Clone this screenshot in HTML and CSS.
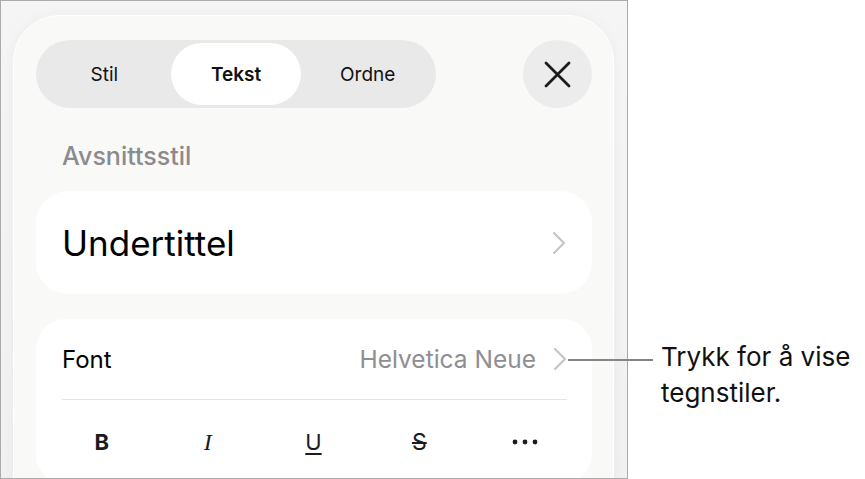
FILE: index.html
```html
<!DOCTYPE html>
<html>
<head>
    <meta charset="UTF-8">
    <title>Tekst</title>
    <link rel="stylesheet" href="styles.css">
</head>
<body>
    <div class="figure">
        <div class="device">
            <div class="sheet">
                <div class="toolbar">
                    <div class="segmented">
                        <div class="segment">Stil</div>
                        <div class="segment selected">Tekst</div>
                        <div class="segment">Ordne</div>
                    </div>
                    <button class="close-button">
                        <svg width="27" height="27" viewBox="0 0 27 27">
                            <path d="M2 2 L25 25 M25 2 L2 25" stroke="#1c1c1e" stroke-width="2.8" stroke-linecap="round" fill="none"/>
                        </svg>
                    </button>
                </div>

                <div class="section-label">Avsnittsstil</div>

                <div class="card style-card">
                    <span class="style-name">Undertittel</span>
                    <svg class="chevron" width="14" height="24" viewBox="0 0 14 24">
                        <path d="M2 2 L12 12 L2 22" stroke="#c5c5c8" stroke-width="2.2" stroke-linecap="round" stroke-linejoin="round" fill="none"/>
                    </svg>
                </div>

                <div class="card font-card">
                    <div class="font-row">
                        <span class="font-label">Font</span>
                        <span class="font-value">
                            Helvetica Neue
                            <svg class="chevron" width="14" height="24" viewBox="0 0 14 24">
                                <path d="M2 2 L12 12 L2 22" stroke="#c5c5c8" stroke-width="2.2" stroke-linecap="round" stroke-linejoin="round" fill="none"/>
                            </svg>
                        </span>
                    </div>
                    <div class="format-row">
                        <div class="format-btn bold">B</div>
                        <div class="format-btn italic">I</div>
                        <div class="format-btn underline">U</div>
                        <div class="format-btn strike">S</div>
                        <div class="format-btn more">
                            <svg width="26" height="6" viewBox="0 0 26 6">
                                <circle cx="3" cy="3" r="2.4" fill="#1c1c1e"/>
                                <circle cx="13" cy="3" r="2.4" fill="#1c1c1e"/>
                                <circle cx="23" cy="3" r="2.4" fill="#1c1c1e"/>
                            </svg>
                        </div>
                    </div>
                </div>
            </div>
        </div>

        <div class="callout">
            <p class="callout-text">Trykk for å vise<br>tegnstiler.</p>
        </div>
        <div class="callout-line"></div>
    </div>
</body>
</html>
```

FILE: styles.css
```css
body {
    margin: 0;
    padding: 0;
    background: #fff;
    font-family: Inter, "Noto Sans", sans-serif;
    color: #000;
}

.figure {
    position: relative;
    display: flex;
    height: 479px;
}

/* screen frame */
.device {
    width: 628px;
    height: 479px;
    box-sizing: border-box;
    border: 1px solid #ababab;
    background: linear-gradient(180deg, #f5f5f5, #f1f1f1);
    overflow: hidden;
    flex-shrink: 0;
}

.sheet {
    margin: 14px 13px 0 12px;
    height: 560px;
    box-sizing: border-box;
    border: 1px solid #fff;
    border-radius: 46px;
    background: #f9f9f8;
    box-shadow: 0 0 14px rgba(0,0,0,0.04);
    padding: 24px 21px 0 22px;
}

.toolbar {
    display: flex;
    justify-content: space-between;
    align-items: center;
    height: 68px;
}

.segmented {
    display: flex;
    width: 400px;
    height: 68px;
    box-sizing: border-box;
    padding: 3px;
    border-radius: 34px;
    background: #e9e9e9;
}

.segment {
    flex: 1;
    display: flex;
    align-items: center;
    justify-content: center;
    border-radius: 31px;
    font-size: 19px;
    color: #111;
}

.segment.selected {
    background: #fff;
    font-weight: 600;
    margin: 0 1px;
}

.close-button {
    width: 69px;
    height: 68px;
    border: none;
    border-radius: 50%;
    background: #ececec;
    display: flex;
    align-items: center;
    justify-content: center;
    padding: 0;
}

.section-label {
    margin-top: 33px;
    padding-left: 26px;
    font-size: 25px;
    line-height: 30px;
    font-weight: 500;
    color: #8b8b8e;
}

.card {
    background: #fff;
    border-radius: 32px;
}

.style-card {
    margin-top: 20px;
    height: 103px;
    display: flex;
    align-items: center;
    justify-content: space-between;
    padding: 0 26px;
}

.style-name {
    font-size: 35px;
    color: #000;
}

.font-card {
    margin-top: 25px;
    border-radius: 30px;
}

.font-row {
    height: 80px;
    display: flex;
    align-items: center;
    justify-content: space-between;
    margin: 0 25px 0 26px;
    border-bottom: 1px solid #e4e4e4;
}

.font-label {
    font-size: 24px;
}

.font-value {
    display: flex;
    align-items: center;
    gap: 17px;
    font-size: 24.5px;
    color: #8e8e93;
}

.format-row {
    display: flex;
    height: 84px;
    padding: 0 14px 0 13px;
}

.format-btn {
    flex: 1;
    display: flex;
    align-items: center;
    justify-content: center;
    font-size: 22px;
    color: #1c1c1e;
}

.format-btn.bold {
    font-weight: 700;
}

.format-btn.italic {
    font-family: "Liberation Serif", serif;
    font-style: italic;
    font-size: 24px;
}

.format-btn.underline {
    text-decoration: underline;
    text-underline-offset: 3px;
    text-decoration-thickness: 1.5px;
}

.format-btn.strike {
    font-size: 23px;
    text-decoration: line-through;
    text-decoration-thickness: 1.5px;
}

.callout {
    margin-left: 33px;
}

.callout-text {
    margin: 339px 0 0;
    font-size: 26px;
    line-height: 36px;
    color: #111;
}

.callout-line {
    position: absolute;
    left: 568px;
    top: 359px;
    width: 85px;
    height: 2px;
    background: #858585;
}
```
